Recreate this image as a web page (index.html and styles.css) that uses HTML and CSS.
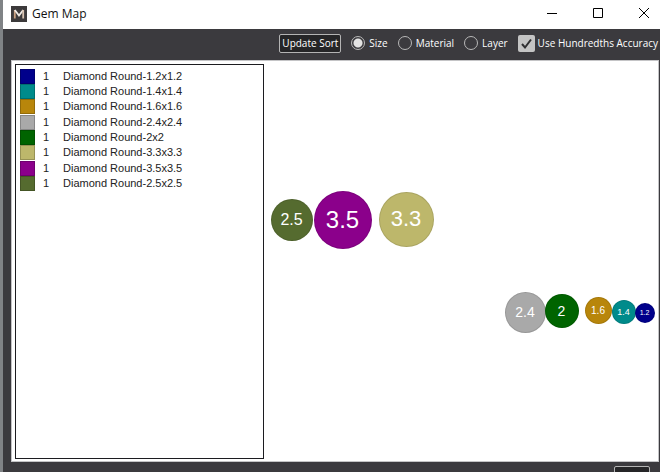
FILE: index.html
```html
<!DOCTYPE html>
<html lang="en">
<head>
    <meta charset="UTF-8">
    <meta name="viewport" content="width=device-width, initial-scale=1.0">
    <title>Gem Map</title>
    <link rel="stylesheet" href="styles.css">
</head>
<body>
    <div class="window">
        <header class="titlebar">
            <svg class="logo" viewBox="0 0 16 16" aria-hidden="true">
                <rect width="16" height="16" fill="#3c3a3b"/>
                <path d="M3.8 12.5V4" fill="none" stroke="#c9a182" stroke-width="1.8"/>
                <path d="M3.8 4L8 9.5L12.2 4" fill="none" stroke="#f0ebe6" stroke-width="1.8"/>
                <path d="M12.2 4V12.5" fill="none" stroke="#d9c4b2" stroke-width="1.8"/>
            </svg>
            <h1>Gem Map</h1>
            <div class="controls">
                <button type="button" aria-label="Minimize">
                    <svg viewBox="0 0 10 10"><path d="M0 5.5H10"/></svg>
                </button>
                <button type="button" aria-label="Maximize">
                    <svg viewBox="0 0 10 10"><path d="M0.5 0.5H9.5V9.5H0.5Z"/></svg>
                </button>
                <button type="button" aria-label="Close">
                    <svg viewBox="0 0 10 10"><path d="M0 0L10 10M10 0L0 10"/></svg>
                </button>
            </div>
        </header>

        <form class="toolbar">
            <button type="button" class="update">Update Sort</button>
            <label class="option"><input type="radio" name="sort" value="size" checked>Size</label>
            <label class="option"><input type="radio" name="sort" value="material">Material</label>
            <label class="option"><input type="radio" name="sort" value="layer">Layer</label>
            <label class="option accuracy">
                <span class="check">
                    <input type="checkbox" name="accuracy" checked>
                    <svg viewBox="0 0 17 17" aria-hidden="true"><path d="M4 9L7 12.5L13 4.5"/></svg>
                </span>Use Hundredths Accuracy
            </label>
        </form>

        <main class="panel">
            <ul class="legend">
                <li><span class="swatch navy"></span><span>1</span><span>Diamond Round-1.2x1.2</span></li>
                <li><span class="swatch teal"></span><span>1</span><span>Diamond Round-1.4x1.4</span></li>
                <li><span class="swatch gold"></span><span>1</span><span>Diamond Round-1.6x1.6</span></li>
                <li><span class="swatch gray"></span><span>1</span><span>Diamond Round-2.4x2.4</span></li>
                <li><span class="swatch green"></span><span>1</span><span>Diamond Round-2x2</span></li>
                <li><span class="swatch khaki"></span><span>1</span><span>Diamond Round-3.3x3.3</span></li>
                <li><span class="swatch purple"></span><span>1</span><span>Diamond Round-3.5x3.5</span></li>
                <li><span class="swatch olive"></span><span>1</span><span>Diamond Round-2.5x2.5</span></li>
            </ul>
            <div class="map">
                <div class="gem gem-25 olive">2.5</div>
                <div class="gem gem-35 purple">3.5</div>
                <div class="gem gem-33 khaki">3.3</div>
                <div class="gem gem-24 gray">2.4</div>
                <div class="gem gem-20 green">2</div>
                <div class="gem gem-16 gold">1.6</div>
                <div class="gem gem-14 teal">1.4</div>
                <div class="gem gem-12 navy">1.2</div>
            </div>
        </main>

        <footer class="footer">
            <button type="button" class="footer-button" aria-label="OK"></button>
        </footer>
    </div>
</body>
</html>
```

FILE: styles.css
```css
* { box-sizing: border-box; }

body {
    margin: 0;
    font-family: "Open Sans", "Noto Sans", sans-serif;
    font-size: 10px;
}

.window {
    display: flex;
    flex-direction: column;
    height: 100vh;
    overflow: hidden;
    background: #3b3a3e;
    border-left: 3px solid #808386;
}

/* title bar */
.titlebar {
    display: flex;
    flex: none;
    align-items: center;
    height: 29px;
    padding: 0 0 2px 8px;
    background: #fff;
}
.titlebar h1 {
    margin: 0 0 0 5px;
    font-size: 12px;
    font-weight: normal;
    color: #111;
}
.logo { width: 16px; height: 16px; }
.controls {
    display: flex;
    gap: 14px;
    margin-left: auto;
}
.controls button {
    display: flex;
    align-items: center;
    justify-content: center;
    width: 32px;
    height: 25px;
    padding: 0 0 1px;
    border: 0;
    background: none;
}
.controls svg { width: 10px; height: 10px; fill: none; stroke: #000; stroke-width: 1; }

/* sort options */
.toolbar {
    display: flex;
    flex: none;
    align-items: center;
    justify-content: flex-end;
    height: 31px;
    padding: 0 2px 3px 0;
    color: #fff;
}
.update {
    height: 19px;
    width: 62px;
    margin-right: 10px;
    padding: 0;
    border: 1px solid #b4b4b4;
    border-radius: 2px;
    background: #252527;
    color: #fff;
    font: inherit;
    white-space: nowrap;
}
.option {
    display: flex;
    align-items: center;
    gap: 4px;
    margin-right: 10px;
    white-space: nowrap;
}
.option input { appearance: none; margin: 0; }
.option input[type="radio"] {
    width: 14px;
    height: 14px;
    border: 1px solid #b8b8b8;
    border-radius: 50%;
}
.option input[type="radio"]:checked {
    background: radial-gradient(circle, #e4e4e4 4px, transparent 5px);
}
.accuracy { gap: 3px; margin-right: 0; }
.check { display: grid; }
.check input, .check svg { grid-area: 1 / 1; width: 17px; height: 17px; }
.check input { border-radius: 2px; background: #c4c4c4; }
.check svg { fill: none; stroke: #303032; stroke-width: 2; pointer-events: none; }

/* legend and map */
.panel {
    display: flex;
    flex: 1;
    min-height: 0;
    margin: 0 1px 0 8px;
    padding: 3px 3px 2px;
    border: 1px solid #c4c4c6;
    background: #fff;
    font-family: "Liberation Sans", Arial, sans-serif;
}
.legend {
    flex: none;
    width: 249px;
    margin: 0;
    padding: 4px;
    border: 1px solid #1c1c20;
    list-style: none;
    font-size: 11px;
    line-height: 15px;
    color: #222;
}
.legend li {
    display: grid;
    grid-template-columns: 23px 20px auto;
    align-items: center;
}
.legend li:nth-child(3n) { margin-bottom: 1px; }
.swatch { width: 15px; height: 15px; border: 1px solid #00000033; }

.map { position: relative; flex: 1; }
.gem {
    position: absolute;
    display: flex;
    align-items: center;
    justify-content: center;
    padding: 0 1px 1px 0;
    border: 1px solid #0000001a;
    border-radius: 50%;
    color: #fff;
}
.gem-25 { left: 7px; top: 135px; width: 42px; height: 42px; font-size: 16px; }
.gem-35 { left: 50px; top: 127px; width: 58px; height: 58px; font-size: 24px; }
.gem-33 { left: 115px; top: 128px; width: 55px; height: 55px; font-size: 22px; }
.gem-24 { left: 241px; top: 228px; width: 41px; height: 41px; font-size: 14px; }
.gem-20 { left: 281px; top: 230px; width: 34px; height: 34px; font-size: 14px; }
.gem-16 { left: 321px; top: 233px; width: 27px; height: 27px; font-size: 10px; }
.gem-14 { left: 348px; top: 236px; width: 24px; height: 24px; font-size: 9px; }
.gem-12 { left: 371px; top: 239px; width: 20px; height: 20px; font-size: 7px; }

.navy { background: #00008b; }
.teal { background: #008b8b; }
.gold { background: #b8860b; }
.gray { background: #a9a9a9; }
.green { background: #006400; }
.khaki { background: #bdb76b; }
.purple { background: #8b008b; }
.olive { background: #556b2f; }

/* bottom strip, its button runs below the window edge */
.footer {
    display: flex;
    flex: none;
    justify-content: flex-end;
    height: 10px;
    padding: 4px 10px 0 0;
}
.footer-button {
    width: 36px;
    height: 19px;
    border: 1px solid #b4b4b4;
    border-radius: 2px;
    background: #252527;
}
```
